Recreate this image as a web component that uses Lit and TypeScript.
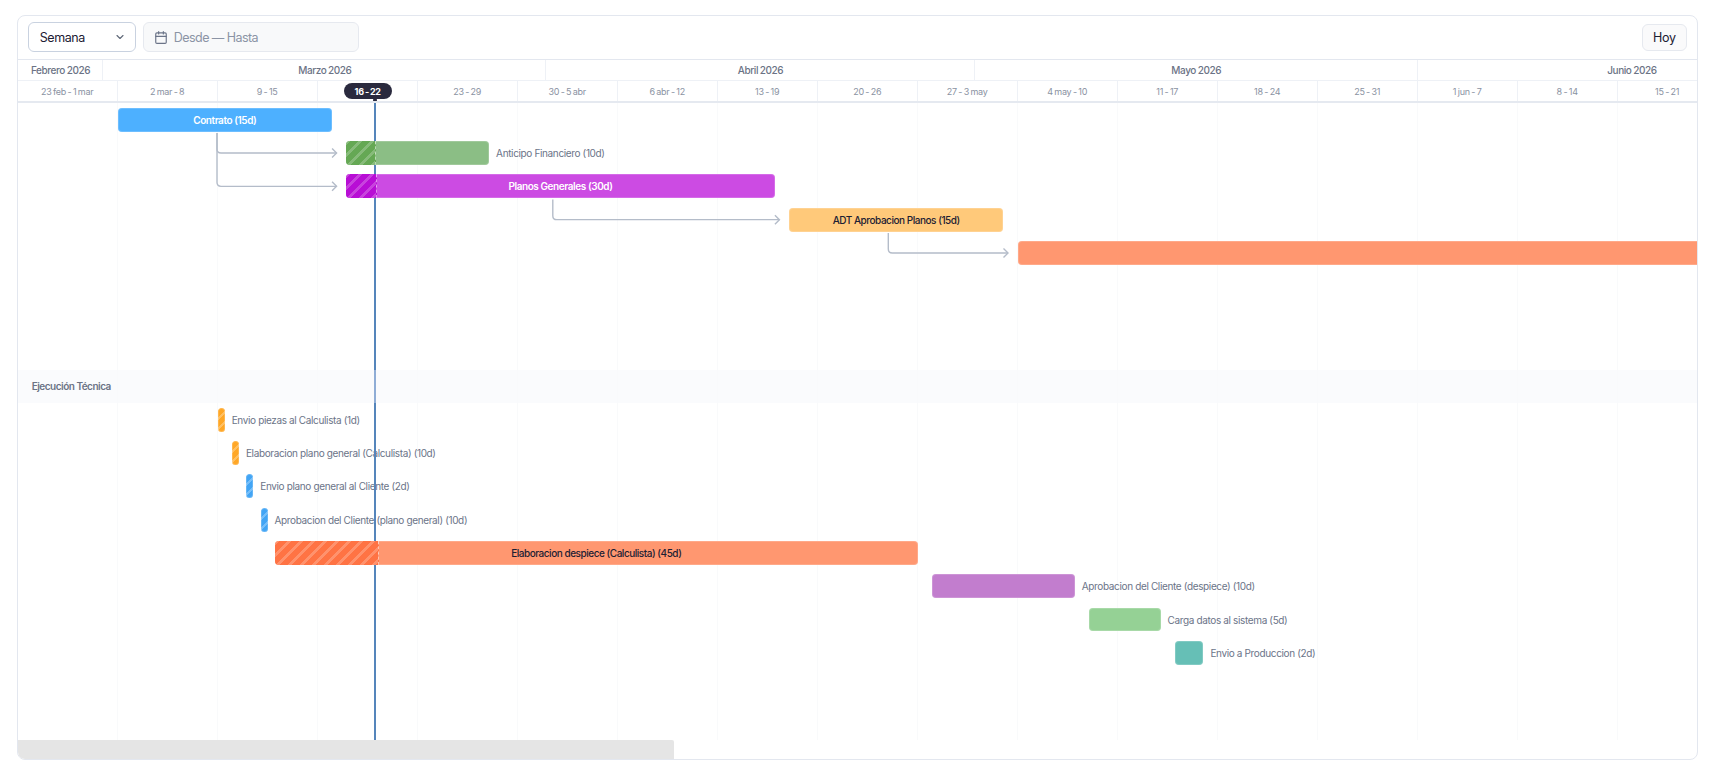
import { LitElement, html, css, svg } from "lit";
import { customElement } from "lit/decorators.js";

const WEEK = 100;
const DAY = WEEK / 7;
const ROW = 100 / 3;
const ORIGIN = 7; // the grid starts one week before the first bar column

const months = [
  { label: "Febrero 2026", days: 6 },
  { label: "Marzo 2026", days: 31 },
  { label: "Abril 2026", days: 30 },
  { label: "Mayo 2026", days: 31 },
  { label: "Junio 2026", days: 30 },
];

const weeks = [
  "23 feb - 1 mar", "2 mar - 8", "9 - 15", "16 - 22", "23 - 29", "30 - 5 abr",
  "6 abr - 12", "13 - 19", "20 - 26", "27 - 3 may", "4 may - 10", "11 - 17",
  "18 - 24", "25 - 31", "1 jun - 7", "8 - 14", "15 - 21",
];

type Row = {
  group?: string;
  start?: number;
  days?: number;
  px?: number;
  tone?: string;
  inside?: string;
  outside?: string;
  done?: number;
  dark?: boolean;
};

const rows: Row[] = [
  { start: 0, days: 15, tone: "sky", inside: "Contrato (15d)" },
  { start: 16, days: 10, tone: "green", outside: "Anticipo Financiero (10d)", done: 28.7 },
  { start: 16, days: 30, tone: "purple", inside: "Planos Generales (30d)", done: 30 },
  { start: 47, days: 15, tone: "amber", inside: "ADT Aprobacion Planos (15d)", dark: true },
  { start: 63, days: 60, tone: "coral" },
  {},
  {},
  {},
  { group: "Ejecución Técnica" },
  { start: 7, px: 7, tone: "s-orange", outside: "Envio piezas al Calculista (1d)" },
  { start: 8, px: 7, tone: "s-orange", outside: "Elaboracion plano general (Calculista) (10d)" },
  { start: 9, px: 7, tone: "s-blue", outside: "Envio plano general al Cliente (2d)" },
  { start: 10, px: 7, tone: "s-blue", outside: "Aprobacion del Cliente (plano general) (10d)" },
  { start: 11, days: 45, tone: "coral", inside: "Elaboracion despiece (Calculista) (45d)", done: 103.3, dark: true },
  { start: 57, days: 10, tone: "violet", outside: "Aprobacion del Cliente (despiece) (10d)" },
  { start: 68, days: 5, tone: "mint", outside: "Carga datos al sistema (5d)" },
  { start: 74, days: 2, tone: "teal", outside: "Envio a Produccion (2d)" },
];

const links = [
  { x: 199, from: 30, row: 1, start: 16 },
  { x: 199, from: 30, row: 2, start: 16 },
  { x: 534.8, from: 96.5, row: 3, start: 47 },
  { x: 870.3, from: 130, row: 4, start: 63 },
];

const dayX = (d: number) => (d + ORIGIN) * DAY;

@customElement("app-root")
export class AppRoot extends LitElement {
  static styles = css`
    :host {
      display: block;
      box-sizing: border-box;
      padding: 15px 19px 12px 16.7px;
      font-family: Inter, "Noto Sans", sans-serif;
      background: #fff;
      color: #1c2030;
    }
    .card {
      box-sizing: border-box;
      height: 745px;
      border: 1px solid #e3e7ef;
      border-radius: 8px;
      background: #fff;
      overflow: hidden;
      display: flex;
      flex-direction: column;
    }
    .toolbar {
      box-sizing: border-box;
      flex: none;
      height: 44px;
      padding: 6.3px 10.4px 0 10.6px;
      border-bottom: 1px solid #e3e7ef;
      display: flex;
      align-items: flex-start;
      gap: 7.6px;
    }
    .select {
      box-sizing: border-box;
      width: 107.4px;
      height: 30px;
      padding: 0 9px 0 10.5px;
      border: 1px solid #c9d2e0;
      border-radius: 6px;
      display: flex;
      align-items: center;
      justify-content: space-between;
      font-size: 12.5px;
      letter-spacing: -0.45px;
      color: #1c2033;
    }
    .range {
      box-sizing: border-box;
      width: 215.4px;
      height: 30px;
      padding: 0 0 0 10px;
      border: 1px solid #e6e9ef;
      border-radius: 6px;
      background: #f8f9fa;
      display: flex;
      align-items: center;
      gap: 5.5px;
      font-size: 12.5px;
      letter-spacing: -0.55px;
      color: #8b94a5;
    }
    .hoy {
      box-sizing: border-box;
      margin: 2px 0 0 auto;
      width: 44.4px;
      height: 26.4px;
      border: 1px solid #e6e9ef;
      border-radius: 6px;
      background: #fafafb;
      display: flex;
      align-items: center;
      justify-content: center;
      font-size: 12.5px;
      letter-spacing: -0.2px;
      color: #1c2033;
    }
    .months,
    .weeks {
      flex: none;
      display: flex;
      box-sizing: border-box;
      overflow: hidden;
    }
    .months {
      height: 21px;
      border-bottom: 1px solid #eef1f6;
    }
    .month {
      box-sizing: border-box;
      flex: none;
      border-right: 1px solid #eef1f6;
      padding-left: 1px;
      display: flex;
      align-items: center;
      justify-content: center;
      font-size: 10px;
      font-weight: 500;
      letter-spacing: -0.42px;
      word-spacing: -0.5px;
      color: #6b7385;
    }
    .weeks {
      position: relative;
      height: 22px;
      border-bottom: 2px solid #e5e9f0;
    }
    .week {
      box-sizing: border-box;
      flex: none;
      width: 100px;
      border-right: 1px solid #eef1f6;
      display: flex;
      align-items: center;
      justify-content: center;
      font-size: 9px;
      letter-spacing: -0.25px;
      word-spacing: -0.8px;
      color: #8a92a2;
    }
    .pill {
      margin-left: 1px;
      width: 48px;
      height: 16px;
      border-radius: 8px;
      background: #2a2a3e;
      color: #fff;
      font-weight: 700;
      display: flex;
      align-items: center;
      justify-content: center;
    }
    .dot {
      position: absolute;
      left: 355.3px;
      bottom: -1px;
      width: 4px;
      height: 4px;
      border-radius: 50%;
      background: #2a2a3e;
    }
    .body {
      position: relative;
      flex: none;
      height: 637px;
      overflow: hidden;
    }
    .grid {
      position: absolute;
      inset: 0;
      display: flex;
    }
    .gridcell {
      box-sizing: border-box;
      flex: none;
      width: 100px;
      border-right: 1px solid #f9fafb;
    }
    .links {
      position: absolute;
      left: 0;
      top: 0;
      width: 1680px;
      height: 637px;
      fill: none;
      stroke: #b4bcc9;
      stroke-width: 1.4;
    }
    .today {
      position: absolute;
      left: 356.3px;
      top: 0;
      width: 2px;
      height: 637px;
      z-index: 1;
      background: linear-gradient(
        180deg,
        #5585bb 0 267px,
        #8fadd6 267px 300px,
        #5585bb 300px
      );
    }
    .rows {
      position: relative;
      display: flex;
      flex-direction: column;
    }
    .row {
      height: 33.3333px;
      flex: none;
      display: flex;
      align-items: center;
      white-space: nowrap;
    }
    .band {
      background: rgba(248, 250, 252, 0.75);
      padding-left: 14px;
      font-size: 10px;
      font-weight: 600;
      letter-spacing: -0.5px;
      color: #6b7385;
    }
    .bar {
      position: relative;
      z-index: 2;
      box-sizing: border-box;
      flex: none;
      height: 23.8px;
      border-radius: 4px;
      box-shadow: inset 0 0 0 1px rgba(255, 255, 255, 0.18);
      overflow: hidden;
      display: flex;
      align-items: center;
      justify-content: center;
      font-size: 10px;
      font-weight: 600;
      letter-spacing: -0.42px;
      color: #fff;
    }
    .bar.dark {
      color: #1c2033;
      font-weight: 500;
      letter-spacing: -0.47px;
    }
    .bar span {
      position: relative;
    }
    .hatch {
      position: absolute;
      left: 0;
      top: 0;
      bottom: 0;
      border-right: 1px dashed rgba(255, 255, 255, 0.55);
      background-image: repeating-linear-gradient(
        135deg,
        rgba(255, 255, 255, 0.22) 0 3px,
        transparent 3px 8.5px
      );
    }
    .outside {
      margin-left: 7px;
      font-size: 10px;
      letter-spacing: -0.36px;
      color: #6b7488;
    }
    .sky { background: #4db0ff; }
    .green { background: #8bbe85; }
    .green .hatch { background-color: #65a854; }
    .purple { background: #cc4be3; }
    .purple .hatch { background-color: #b80ed5; }
    .amber { background: #ffc97a; }
    .coral { background: #ff9770; }
    .coral .hatch { background-color: #ff7344; }
    .violet { background: #c27dce; }
    .mint { background: #95d195; }
    .teal { background: #66bfb6; }
    .s-orange,
    .s-blue {
      border-radius: 3.5px;
      background-image: repeating-linear-gradient(
        135deg,
        rgba(255, 255, 255, 0.28) 0 2px,
        transparent 2px 7px
      );
    }
    .s-orange { background-color: #ffa726; }
    .s-blue { background-color: #42a5f5; }
    .thumbtrack {
      flex: 1;
      display: flex;
    }
    .thumb {
      width: 656.3px;
      background: #e5e5e5;
      border-radius: 0 2px 0 6px;
    }
  `;

  private renderBar(r: Row) {
    const width = r.px ?? (r.days ?? 0) * DAY;
    const style = `margin-left:${dayX(r.start ?? 0)}px;width:${width}px`;
    return html`
      <div class="bar ${r.tone} ${r.dark ? "dark" : ""}" style=${style}>
        ${r.done ? html`<div class="hatch" style="width:${r.done}px"></div>` : ""}
        ${r.inside ? html`<span>${r.inside}</span>` : ""}
      </div>
      ${r.outside ? html`<div class="outside">${r.outside}</div>` : ""}
    `;
  }

  private renderLink(l: { x: number; from: number; row: number; start: number }) {
    const y = (l.row + 0.5) * ROW;
    const tip = dayX(l.start) - 10;
    return svg`
      <path d="M${l.x} ${l.from}V${y - 4}Q${l.x} ${y} ${l.x + 4} ${y}H${tip}" />
      <path d="M${tip - 4.5} ${y - 4.5}L${tip} ${y}L${tip - 4.5} ${y + 4.5}" />
    `;
  }

  render() {
    return html`
      <div class="card">
        <div class="toolbar">
          <div class="select">
            <span>Semana</span>
            <svg width="12" height="12" viewBox="0 0 24 24" fill="none" stroke="#5f6878" stroke-width="2.2" stroke-linecap="round" stroke-linejoin="round">
              <path d="m6 9 6 6 6-6" />
            </svg>
          </div>
          <div class="range">
            <svg width="14" height="15" viewBox="0 0 24 24" fill="none" stroke="#6b7488" stroke-width="2" stroke-linecap="round" stroke-linejoin="round">
              <path d="M8 2v4" /><path d="M16 2v4" />
              <rect x="3" y="4" width="18" height="18" rx="2" />
              <path d="M3 10h18" />
            </svg>
            <span>Desde — Hasta</span>
          </div>
          <div class="hoy">Hoy</div>
        </div>
        <div class="months">
          ${months.map(
            (m) => html`<div class="month" style="width:${m.days * DAY}px">${m.label}</div>`
          )}
        </div>
        <div class="weeks">
          ${weeks.map(
            (w, i) =>
              html`<div class="week">${i === 3 ? html`<span class="pill">${w}</span>` : w}</div>`
          )}
          <div class="dot"></div>
        </div>
        <div class="body">
          <div class="grid">${weeks.map(() => html`<div class="gridcell"></div>`)}</div>
          <svg class="links">${links.map((l) => this.renderLink(l))}</svg>
          <div class="today"></div>
          <div class="rows">
            ${rows.map((r) =>
              r.group
                ? html`<div class="row band">${r.group}</div>`
                : html`<div class="row">${r.tone ? this.renderBar(r) : ""}</div>`
            )}
          </div>
        </div>
        <div class="thumbtrack"><div class="thumb"></div></div>
      </div>
    `;
  }
}
